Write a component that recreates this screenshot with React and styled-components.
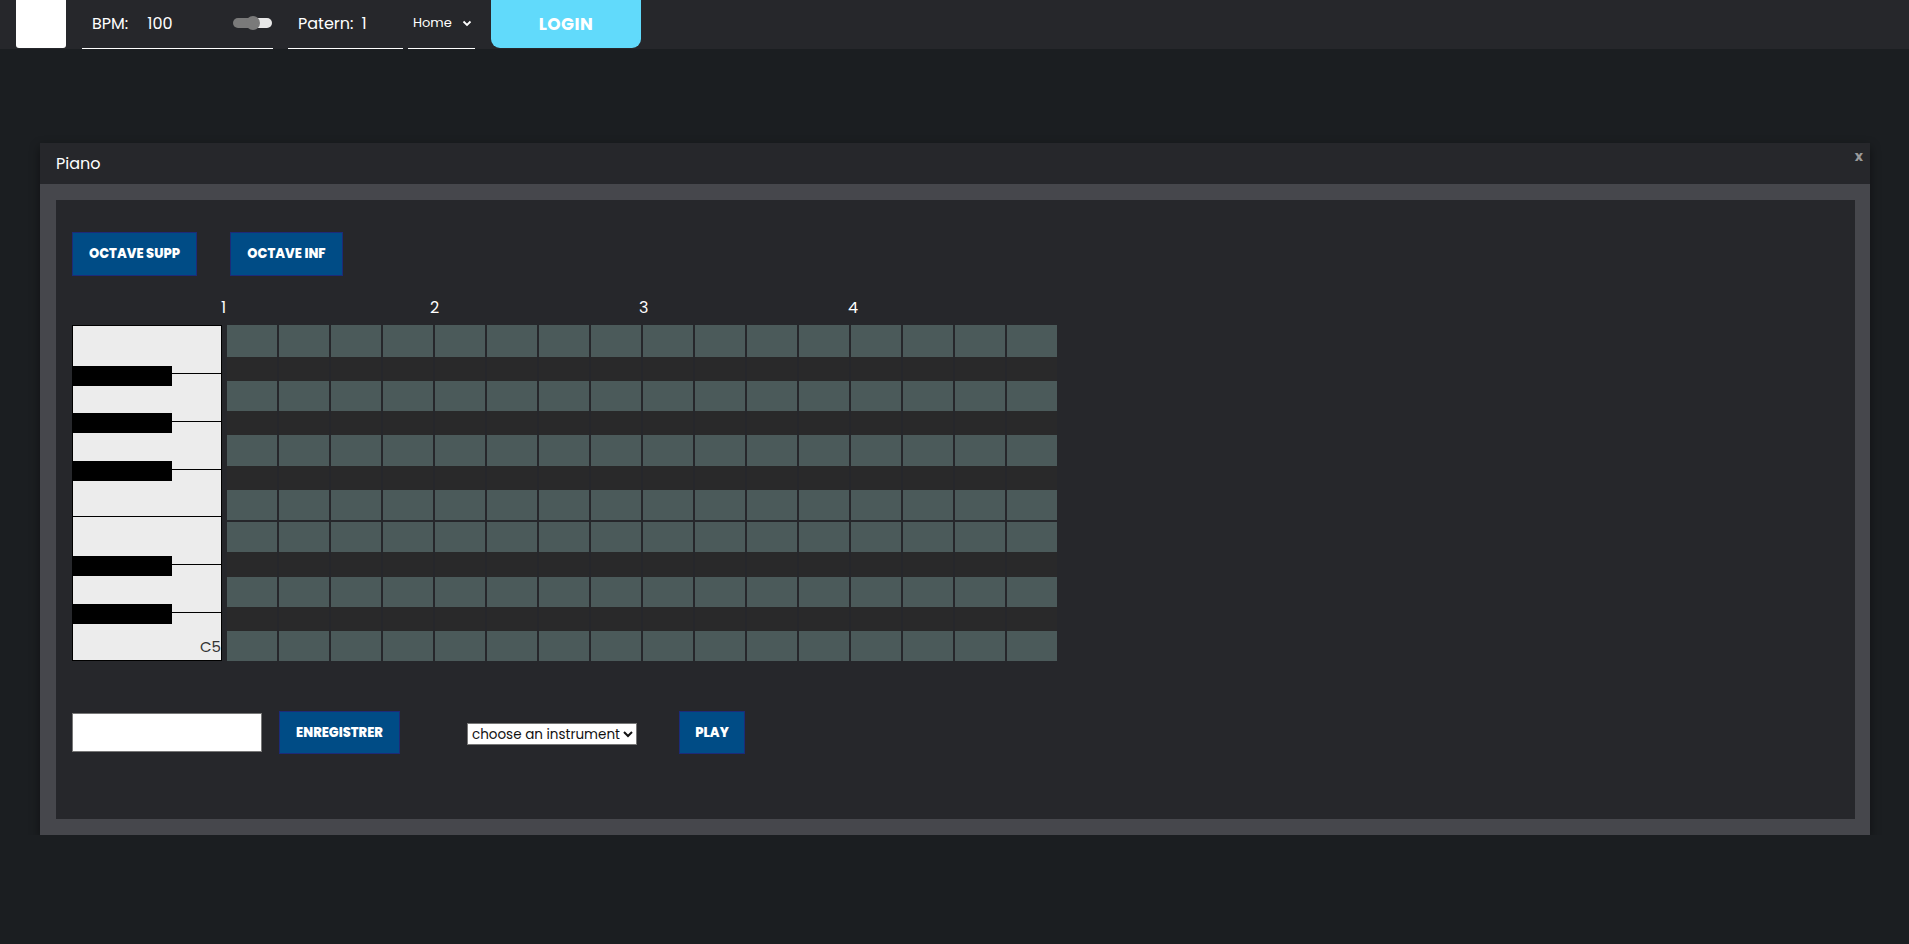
import React from "react";
import styled, { createGlobalStyle } from "styled-components";

const GlobalStyle = createGlobalStyle`
	body {
		margin: 0;
		background: #1b1e21;
		font-family: "Poppins", "Inter", "DejaVu Sans", sans-serif;
		color: #fff;
	}
`;

const Header = styled.header`
	display: flex;
	height: 49px;
	padding-left: 16px;
	background: #26272b;
`;

const Logo = styled.div`
	width: 50px;
	height: 48px;
	background: #fff;
	border-radius: 0 0 3px 3px;
`;

const Field = styled.div`
	display: flex;
	align-items: center;
	box-sizing: border-box;
	height: 49px;
	width: ${(p) => p.width}px;
	margin-left: ${(p) => p.gap}px;
	padding: 0 1px 2px ${(p) => p.pad}px;
	border-bottom: 1px solid #fff;
	font-size: ${(p) => p.size || 16}px;
`;

const Value = styled.span`
	margin-left: ${(p) => p.gap}px;
`;

const Slider = styled.div`
	position: relative;
	width: 39px;
	height: 10px;
	margin-left: auto;
	border-radius: 5px;
	background: linear-gradient(to right, #7a7a7a 0 55%, #e8e8e8 55% 100%);
`;

const Knob = styled.span`
	position: absolute;
	left: 13px;
	top: -2px;
	width: 14px;
	height: 14px;
	border-radius: 50%;
	background: #7a7a7a;
`;

const Chevron = () => (
	<svg width="10" height="7" viewBox="0 0 10 7" style={{ marginLeft: 10 }}>
		<path d="M1.5 1.5 L5 5 L8.5 1.5" fill="none" stroke="#fff" strokeWidth="1.8" />
	</svg>
);

const LoginButton = styled.button`
	width: 150px;
	height: 48px;
	margin-left: 16px;
	border: none;
	border-radius: 0 0 9px 9px;
	background: #61dafb;
	color: #fff;
	font-family: inherit;
	font-size: 17px;
	font-weight: 700;
	letter-spacing: 0.5px;
`;

const Panel = styled.section`
	width: 1830px;
	margin: 94px 0 0 40px;
	box-shadow: 0 4px 10px rgba(0, 0, 0, 0.45);
`;

const TitleBar = styled.div`
	position: relative;
	display: flex;
	align-items: center;
	height: 41px;
	padding-left: 16px;
	background: #26272b;
	font-size: 16px;
`;

const Close = styled.span`
	position: absolute;
	right: 7px;
	top: 3px;
	color: #9a9a9a;
	font-size: 14px;
	font-weight: 700;
`;

const Frame = styled.div`
	border: 16px solid #46474c;
	border-right-width: 15px;
`;

const Inner = styled.div`
	background: #26272b;
	padding: 32px 16px 65px;
`;

const ButtonRow = styled.div`
	display: flex;
	gap: 33px;
`;

const BlueButton = styled.button`
	height: ${(p) => p.h || 44}px;
	min-width: ${(p) => p.w}px;
	margin-left: ${(p) => p.ml || 0}px;
	padding: 0 14px;
	border: 1px solid #1d2b78;
	background: #004c86;
	color: #fff;
	font-family: inherit;
	font-size: 13px;
	font-weight: 800;
`;

const BeatRow = styled.div`
	display: flex;
	height: 20px;
	margin: 22px 0 7px 149px;
`;

const Beat = styled.span`
	width: 209px;
	font-size: 16px;
	line-height: 20px;
`;

const Roll = styled.div`
	display: flex;
	gap: 5px;
`;

const Keyboard = styled.div`
	position: relative;
	display: flex;
	flex-direction: column;
	box-sizing: border-box;
	width: 150px;
	height: 336px;
	border: 1px solid #000;
	background: #ececec;
`;

const WhiteKey = styled.div`
	position: relative;
	flex: 1;
	border-bottom: ${(p) => (p.last ? "none" : "1px solid #000")};
`;

const KeyLabel = styled.span`
	position: absolute;
	right: 0;
	bottom: 2px;
	color: #333;
	font-size: 15px;
`;

const BlackKey = styled.div`
	position: absolute;
	left: -1px;
	top: ${(p) => p.top}px;
	width: 100px;
	height: 20px;
	background: #000;
`;

const Grid = styled.div`
	display: flex;
	flex-direction: column;
`;

const NoteRow = styled.div`
	display: flex;
	gap: 2px;
	height: ${(p) => p.h}px;
	padding-top: ${(p) => p.pt || 0}px;
	box-sizing: border-box;
`;

const Cell = styled.div`
	width: 50px;
	background: ${(p) => (p.sharp ? "#29292a" : "#4b5a5a")};
`;

const BottomRow = styled.div`
	display: flex;
	align-items: center;
	margin-top: 50px;
`;

const NameInput = styled.input`
	box-sizing: border-box;
	width: 190px;
	height: 39px;
	border: 1px solid #777;
	background: #fff;
`;

const InstrumentSelect = styled.select`
	width: 170px;
	height: 22px;
	margin: 2px 42px 0 67px;
	border: 1px solid #777;
	background: #fff;
	font-family: inherit;
	font-size: 13.5px;
	color: #111;
`;

const rows = [
	{ h: 32, sharp: false },
	{ h: 24, sharp: true },
	{ h: 30, sharp: false },
	{ h: 24, sharp: true },
	{ h: 31, sharp: false },
	{ h: 24, sharp: true },
	{ h: 30, sharp: false },
	{ h: 32, sharp: false, pt: 2 },
	{ h: 25, sharp: true },
	{ h: 30, sharp: false },
	{ h: 24, sharp: true },
	{ h: 30, sharp: false }
];

const blackTops = [40, 87, 135, 230, 278];

export default function App() {
	return (
		<>
			<GlobalStyle />
			<Header>
				<Logo />
				<Field width={191} gap={16} pad={10}>
					BPM:
					<Value gap={19}>100</Value>
					<Slider>
						<Knob />
					</Slider>
				</Field>
				<Field width={115} gap={15} pad={10}>
					Patern:
					<Value gap={8}>1</Value>
				</Field>
				<Field width={67} gap={5} pad={5} size={13}>
					Home
					<Chevron />
				</Field>
				<LoginButton>LOGIN</LoginButton>
			</Header>

			<Panel>
				<TitleBar>
					Piano
					<Close>x</Close>
				</TitleBar>
				<Frame>
					<Inner>
						<ButtonRow>
							<BlueButton w={125}>OCTAVE SUPP</BlueButton>
							<BlueButton w={113}>OCTAVE INF</BlueButton>
						</ButtonRow>

						<BeatRow>
							{[1, 2, 3, 4].map((n) => (
								<Beat key={n}>{n}</Beat>
							))}
						</BeatRow>

						<Roll>
							<Keyboard>
								{[0, 1, 2, 3, 4, 5, 6].map((i) => (
									<WhiteKey key={i} last={i === 6}>
										{i === 6 && <KeyLabel>C5</KeyLabel>}
									</WhiteKey>
								))}
								{blackTops.map((t) => (
									<BlackKey key={t} top={t} />
								))}
							</Keyboard>
							<Grid>
								{rows.map((r, i) => (
									<NoteRow key={i} h={r.h} pt={r.pt}>
										{Array.from({ length: 16 }).map((_, j) => (
											<Cell key={j} sharp={r.sharp} />
										))}
									</NoteRow>
								))}
							</Grid>
						</Roll>

						<BottomRow>
							<NameInput />
							<BlueButton w={121} h={43} ml={17}>
								ENREGISTRER
							</BlueButton>
							<InstrumentSelect defaultValue="">
								<option value="">choose an instrument</option>
								<option value="piano">piano</option>
							</InstrumentSelect>
							<BlueButton w={66} h={43}>
								PLAY
							</BlueButton>
						</BottomRow>
					</Inner>
				</Frame>
			</Panel>
		</>
	);
}
